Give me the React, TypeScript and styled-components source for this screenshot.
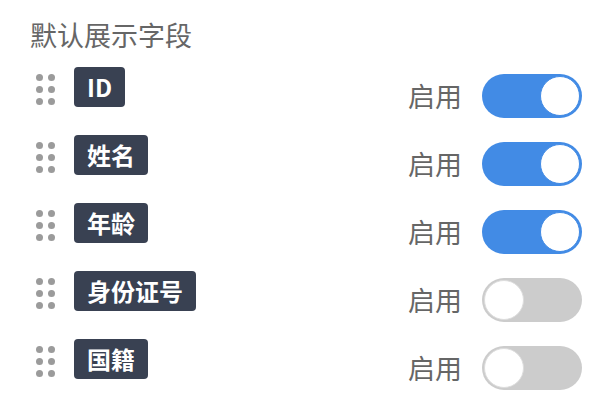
import React, { useState } from "react";
import styled, { createGlobalStyle } from "styled-components";

const GlobalStyle = createGlobalStyle`
  html, body { margin: 0; padding: 0; background: #ffffff; }
  body { font-family: "Noto Sans CJK SC", "Noto Sans", sans-serif; }
`;

const Page = styled.div`
  width: 616px;
  height: 410px;
  box-sizing: border-box;
  padding: 15px 34px 0 30px;
  overflow: hidden;
`;

const Title = styled.div`
  font-size: 27px;
  font-weight: 400;
  line-height: 40px;
  color: #666666;
  margin-bottom: 12px;
`;

const List = styled.div`
  display: flex;
  flex-direction: column;
`;

const Row = styled.div`
  display: flex;
  align-items: flex-start;
  height: 68px;
  padding-left: 6px;
`;

const Handle = styled.div`
  display: grid;
  grid-template-columns: 7px 7px;
  grid-auto-rows: 7px;
  column-gap: 5px;
  row-gap: 5px;
  margin-top: 7px;
  margin-right: 19px;
`;

const Dot = styled.span`
  width: 7px;
  height: 7px;
  border-radius: 50%;
  background: #9b9b9b;
`;

const Tag = styled.span`
  height: 40px;
  padding: 0 13px;
  border-radius: 4px;
  background: #394152;
  color: #ffffff;
  font-size: 24px;
  font-weight: 700;
  line-height: 40px;
  white-space: nowrap;
`;

const Right = styled.div`
  margin-left: auto;
  margin-top: 7px;
  display: flex;
  align-items: center;
  gap: 20px;
`;

const Label = styled.span`
  font-size: 27px;
  font-weight: 400;
  line-height: 44px;
  color: #666666;
`;

const SwitchTrack = styled.button<{ $on: boolean }>`
  position: relative;
  width: 100px;
  height: 44px;
  padding: 0;
  border: none;
  border-radius: 22px;
  background: ${(p) => (p.$on ? "#428be5" : "#cccccc")};
  cursor: pointer;
  outline: none;
`;

const Knob = styled.span<{ $on: boolean }>`
  position: absolute;
  top: 2px;
  left: ${(p) => (p.$on ? "58px" : "2px")};
  width: 40px;
  height: 40px;
  box-sizing: border-box;
  border-radius: 50%;
  background: #ffffff;
  border: 1px solid ${(p) => (p.$on ? "#428be5" : "#dddddd")};
`;

const fields = [
  { name: "ID", on: true },
  { name: "姓名", on: true },
  { name: "年龄", on: true },
  { name: "身份证号", on: false },
  { name: "国籍", on: false },
];

export default function App() {
  const [states, setStates] = useState(fields.map((f) => f.on));
  return (
    <Page>
      <GlobalStyle />
      <Title>默认展示字段</Title>
      <List>
        {fields.map((f, i) => (
          <Row key={f.name}>
            <Handle>
              {Array.from({ length: 6 }).map((_, k) => (
                <Dot key={k} />
              ))}
            </Handle>
            <Tag>{f.name}</Tag>
            <Right>
              <Label>启用</Label>
              <SwitchTrack
                $on={states[i]}
                onClick={() =>
                  setStates((s) => s.map((v, j) => (j === i ? !v : v)))
                }
              >
                <Knob $on={states[i]} />
              </SwitchTrack>
            </Right>
          </Row>
        ))}
      </List>
    </Page>
  );
}
